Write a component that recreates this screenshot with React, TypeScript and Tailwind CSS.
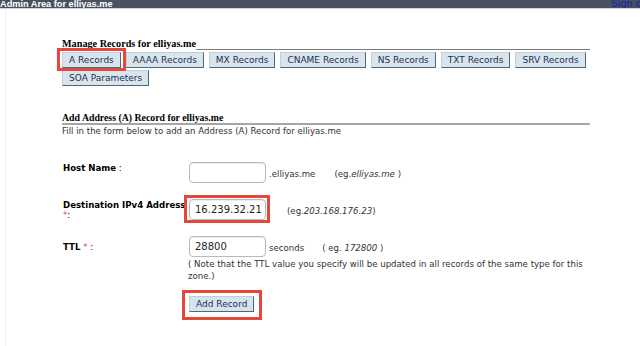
export default function App() {
  const tab =
    "h-[16px] px-[6px] border border-t-[#c5ced6] border-l-[#c5ced6] border-r-[#4f6579] border-b-[#4f6579] bg-[#d9e5ed] text-[#1d2f52] text-[9px] leading-[14px] whitespace-nowrap";
  const input =
    "w-[77px] h-[21px] rounded-[4px] border border-[#b9b9b9] bg-white shadow-[inset_0_1px_1px_rgba(0,0,0,0.08)] px-[5px] text-[10px] leading-[19px] text-[#222]";
  return (
    <div className="w-[640px] h-[346px] bg-white overflow-hidden font-['DejaVu_Sans',sans-serif] text-[#333]">
      {/* header */}
      <div className="h-[9px] bg-[#4a5262] border-b border-[#cfd2d6] overflow-hidden flex justify-between">
        <div className="-mt-[2px] leading-[12px] text-[9.2px] font-bold text-white font-['Liberation_Sans',sans-serif] whitespace-nowrap">
          Admin Area for elliyas.me
        </div>
        <div className="-mt-[2px] leading-[12px] text-[10px] font-bold text-[#1f2f8f] underline font-['Liberation_Sans',sans-serif] w-[29px] whitespace-nowrap overflow-hidden">
          Sign out
        </div>
      </div>

      <div className="ml-[5px] border-l border-[#f0f0f0] h-[337px] pl-[56px]">
        <div className="w-[528px] pt-[29px]">
          {/* Manage records */}
          <div className="flex items-end">
            <div className="h-[12px] leading-[12px] text-[10.2px] font-bold text-black font-['Liberation_Serif',serif] whitespace-nowrap">
              Manage Records for elliyas.me
            </div>
            <div className="flex-1 h-[12px] border-b border-[#7d7d7d]" />
          </div>
          <div className="mt-[2px] flex flex-wrap gap-x-[5px] gap-y-[2px]">
            <div className="relative">
              <div className={tab}>A Records</div>
              <div className="absolute -left-[5px] -right-[5px] -top-[4px] -bottom-[3px] border-[3px] border-[#e5473a] pointer-events-none" />
            </div>
            <div className={tab}>AAAA Records</div>
            <div className={tab}>MX Records</div>
            <div className={tab}>CNAME Records</div>
            <div className={tab}>NS Records</div>
            <div className={tab}>TXT Records</div>
            <div className={tab}>SRV Records</div>
            <div className={tab}>SOA Parameters</div>
          </div>

          {/* Add address */}
          <div className="mt-[27px] h-[12px] leading-[10px] text-[9.8px] font-bold text-black font-['Liberation_Serif',serif] border-b-2 border-[#a6a6a6]">
            Add Address (A) Record for elliyas.me
          </div>
          <div className="leading-[12px] text-[8.6px] text-[#333]">
            Fill in the form below to add an Address (A) Record for elliyas.me
          </div>

          {/* Host name */}
          <div className="mt-[25px] flex">
            <div className="w-[127px] pl-[1px] text-[8.6px] leading-[12px] text-black">
              <span className="font-bold">Host Name</span> :
            </div>
            <div className="flex items-center text-[8.6px] text-[#333]">
              <div className={input}></div>
              <span className="ml-[3px] pt-[3px]">.elliyas.me</span>
              <span className="ml-[19px] pt-[3px]">
                (eg.<i>elliyas.me</i> )
              </span>
            </div>
          </div>

          {/* Destination */}
          <div className="mt-[16px] flex">
            <div className="w-[127px] pl-[1px] pt-[1px] text-[8.6px] leading-[10px] text-black">
              <span className="font-bold whitespace-nowrap">Destination IPv4 Address</span>
              <br />
              <span className="text-[#e5473a]">*</span>:
            </div>
            <div className="flex items-center text-[8.6px] text-[#333]">
              <div className="relative">
                <div className={input}>16.239.32.21</div>
                <div className="absolute -left-[5px] -right-[4px] -top-[4px] -bottom-[3px] border-[3px] border-[#e5473a] pointer-events-none" />
              </div>
              <span className="ml-[21px] pt-[3px]">
                (eg.<i>203.168.176.23</i>)
              </span>
            </div>
          </div>

          {/* TTL */}
          <div className="mt-[16px] flex">
            <div className="w-[127px] pl-[1px] pt-[5px] text-[8.6px] leading-[12px] text-black">
              <span className="font-bold">TTL</span> <span className="text-[#e5473a]">*</span> :
            </div>
            <div className="text-[8.6px] text-[#333]">
              <div className="flex items-center">
                <div className={input}>28800</div>
                <span className="ml-[3px] pt-[3px]">seconds</span>
                <span className="ml-[18px] pt-[3px]">
                  ( eg. <i>172800</i> )
                </span>
              </div>
              <div className="-ml-[1px] mt-[1px] leading-[12px] whitespace-nowrap">
                ( Note that the TTL value you specify will be updated in all records of the same type for this
                <br />
                zone.)
              </div>
              <div className="mt-[14px] relative inline-block">
                <div className="h-[16px] px-[6px] border border-t-[#c5ced6] border-l-[#c5ced6] border-r-[#4f6579] border-b-[#4f6579] bg-[#d6e4ee] text-[#1d2a66] text-[9px] leading-[14px] whitespace-nowrap">
                  Add Record
                </div>
                <div className="absolute -left-[7px] -right-[8px] -top-[6px] -bottom-[8px] border-[3px] border-[#e5473a] pointer-events-none" />
              </div>
            </div>
          </div>
        </div>
      </div>
    </div>
  );
}
